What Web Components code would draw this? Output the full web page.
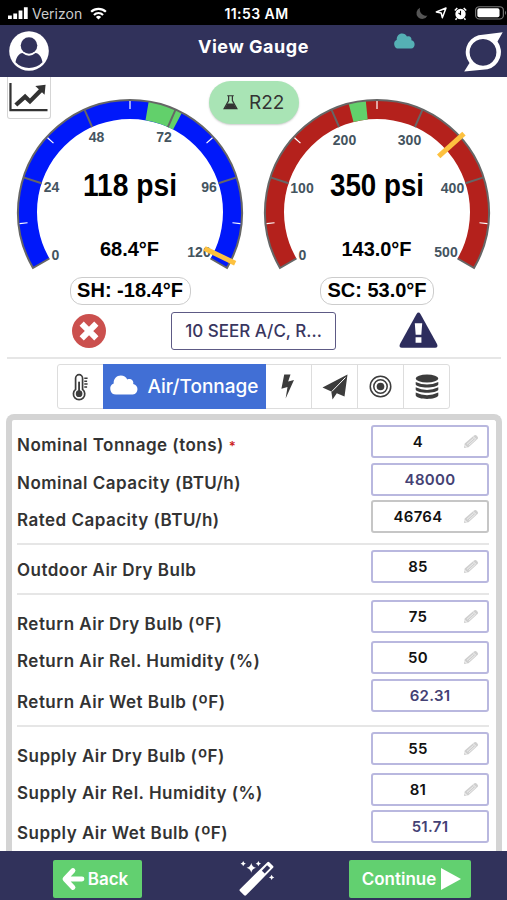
<!DOCTYPE html>
<html lang="en">
<head>
<meta charset="utf-8">
<meta name="viewport" content="width=device-width, initial-scale=1">
<title>View Gauge</title>
<style>
html, body {
  margin: 0;
  height: 100%;
  overflow: hidden;
  background: #fff;
  font-family: Inter, "Liberation Sans", sans-serif;
}
</style>
</head>
<body>
<gauge-app></gauge-app>

<script>
const define = (name, html, setup) => {
  const template = document.createElement("template");
  template.innerHTML = html;
  window.customElements.define(name, class extends HTMLElement {
    constructor() {
      super();
      this.attachShadow({ mode: "open" });
      this.shadowRoot.appendChild(template.content.cloneNode(true));
    }
    connectedCallback() {
      if (setup) setup(this, this.shadowRoot);
    }
  });
};

const ICONS = {
  user: ["0 0 40 40", `<circle cx="20" cy="20" r="19.8" fill="#fff"/><circle cx="20" cy="14.500" r="8.300" fill="#31325b"/><path d="M6.500 31.300C7.500 25.500 10 22.500 13.500 22q6.500 5.500 13 0c3.500.5 6 3.500 7 9.300Q28 37 20 37T6.500 31.300z" fill="#31325b"/>`],
  ring: ["0 0 39 40", `<path fill="#fff" fill-rule="evenodd" d="M38.700.3 33.500 9.500A17.800 17.800 0 0 1 23.500 37.300L.2 39.500 5.500 31A17.500 17.500 0 0 1 14.500 3.300zM19 6.900a13.400 13.400 0 1 0 .01 0z"/>`],
  cloud: ["0 0 28 20", `<path d="M6 19.500a5.800 5.800 0 0 1-2.300-11.100C3.300 3.800 6.700.5 10.800.5c3 0 5.200 1.500 6.500 4 3.500-1.500 6.800 1 5.900 4.500 5.800.8 5.800 9.800-.4 10.500z" fill="currentColor"/>`],
  chart: ["0 0 40 32", `<path d="M1.500 1v29H39.500" fill="none" stroke="#333" stroke-width="2.300"/><path d="m7 24.500 9.500-8.800 5 5L33 8.500" fill="none" stroke="#333" stroke-width="4.400"/><path d="M27 4.200 37.500 3 36.500 13.500z" fill="#333"/>`],
  flask: ["0 0 16 16", `<path d="M4.500.8h7M6 1v5L1.200 14.500h13.600L10 6V1" fill="none" stroke="#333" stroke-width="1.300"/><path d="M4.800 9h6.400l3 5H1.800z" fill="#333"/>`],
  cross: ["0 0 34 34", `<circle cx="17" cy="17" r="17" fill="#cb504e"/><path d="m11.800 11.800 10.400 10.400m0-10.400-10.400 10.400" stroke="#fff" stroke-width="6" stroke-linecap="square" stroke-linejoin="round"/>`],
  warning: ["0 0 40 37", `<path d="M18 2q2-3 4 0l17 31q1.500 3.700-2 3.700H3q-3.500 0-2-3.700z" fill="#2d2d5d"/><path d="M16.200 11.500h7.600l-.9 12h-5.800zM17 26h6v5.700h-6z" fill="#fff"/>`],
  thermo: ["0 0 18 28", `<path d="M3.800 17V5.500a3.700 3.700 0 0 1 7.400 0V17a6 6 0 1 1-7.400 0z" fill="none" stroke="#3c3c3c" stroke-width="1.800"/><path d="M7.500 9v12" stroke="#3c3c3c" stroke-width="2"/><circle cx="7.500" cy="21.500" r="3.500" fill="#3c3c3c"/><path d="M13 5.500h3.500M13 8.500h3M13 11.500h3.500M13 14.500h3" stroke="#3c3c3c" stroke-width="1.500"/>`],
  bolt: ["0 0 16 25", `<path d="M4.500.5h6.700L8.700 7.500l6.200-1.500L6 24.500l2-11.500-6.500 1.700z" fill="#3c3c3c"/>`],
  plane: ["0 0 26 26", `<path d="M25.500.5 22.500 22.500 14.800 19.200 10.500 25.500 9.300 17.500.5 13.500z" fill="#3c3c3c"/><path d="M23.500 3.500 9.800 17.500" stroke="#fff" stroke-width="1"/>`],
  target: ["0 0 24 24", `<g fill="none" stroke="#3c3c3c" stroke-width="1.600"><circle cx="12" cy="12" r="10.700"/><circle cx="12" cy="12" r="7"/></g><circle cx="12" cy="12" r="4" fill="#3c3c3c"/>`],
  database: ["0 0 24 26", `<g fill="#3c3c3c"><ellipse cx="12" cy="4.500" rx="11.300" ry="4"/><path d="M.7 8q11.300 5.200 22.600 0v2.500c-1.500 4-21 4-22.600 0z"/><path d="M.7 13.300q11.300 5.200 22.600 0v2.500c-1.500 4-21 4-22.600 0z"/><path d="M.7 18.600q11.300 5.200 22.600 0v3c-1.500 4.500-21 4.500-22.600 0z"/></g>`],
  pencil: ["0 0 16 16", `<path d="m1 15 .7-5L11 1.500Q12.500.3 13.800 1.800l.8 1Q15.800 4 14.500 5.300L5.500 14z" fill="#cfcfcf"/><path d="m4 11 6.500-6.300M5.800 12 12 6M10 2.700 13.300 6" stroke="#f3f3f3" stroke-width=".9"/><path d="m1.800 12 2 2.300" stroke="#fff" stroke-width="1"/>`],
  back: ["0 0 22 22", `<path d="M11 2.500 3 11l8 8.500M3.500 11H20" fill="none" stroke="#fff" stroke-width="4.800" stroke-linecap="round" stroke-linejoin="round"/>`],
  play: ["0 0 20 22", `<path d="M0 0 20 11 0 22z" fill="#fff"/>`],
  wand: ["0 0 38 38", `<path d="M31 1.200q1-1 2 0l4 4q1 1 0 2L8.500 36.200q-1 1-2 0l-4.500-4.500q-1-1 0-2z" fill="#fff"/><path d="m25.200 10.200 5.500-5.700 3.300 3-5.800 5.700z" fill="#31325b"/><path d="M14 2q.8 4 5 5.200-4.200 1.200-5 5.200-.8-4-5-5.200Q13.200 6 14 2zM5.500 0l1 1.800 1.800 1-1.800 1-1 1.800-1-1.800-1.800-1 1.800-1zM21.500 0l1 1.800 1.800 1-1.800 1-1 1.800-1-1.800-1.800-1 1.800-1zM35.500 14.500l1 1.800 1.800 1-1.800 1-1 1.800-1-1.800-1.800-1 1.800-1z" fill="#fff"/>`],
  wifi: ["0 0 18 14", `<g fill="none" stroke="#fff" stroke-width="2.300"><path d="M1.200 5.200a11 11 0 0 1 15.600 0M4.200 8.500a6.800 6.800 0 0 1 9.600 0"/></g><path d="M9 13.500 6.200 10.700a4 4 0 0 1 5.600 0z" fill="#fff"/>`],
  signal: ["0 0 20 12", `<path d="M0 8.500h3.800V12H0zM5.300 6.500h3.800V12H5.300zM10.600 3.500h3.800V12h-3.800zM15.900.3h3.800V12h-3.800z" fill="#fff"/>`],
  moon: ["0 0 12 12", `<path d="M4 .8a5.800 5.800 0 1 0 7.500 7.800A6.300 6.300 0 0 1 4 .8z" fill="#555"/>`],
  arrow: ["0 0 12 12", `<path d="M11 1 7.300 10.700 6.200 6 1.300 5z" fill="none" stroke="#fff" stroke-width="1.500" stroke-linejoin="round"/>`],
  alarm: ["0 0 13 13", `<circle cx="6.500" cy="7" r="5.200" fill="#fff"/><path d="M.8 3.500 3.300 1m6.400 0 2.500 2.500M2.800 11.200 1.500 12.800m8.700-1.600 1.300 1.600" stroke="#fff" stroke-width="1.500"/><path d="M6.500 3.800V7.400L4.500 6" fill="none" stroke="#000" stroke-width="1.100"/>`],
  battery: ["0 0 30 14", `<rect x=".6" y=".7" width="26" height="12.300" rx="3.500" fill="none" stroke="#777" stroke-width="1.100"/><rect x="2.200" y="2.300" width="20.800" height="9" rx="1.800" fill="#fff"/><path d="M28.200 4.500q1.800 2.300 0 4.600z" fill="#777"/>`]
};

define("ui-icon", `
<style>
:host { display: block; flex: none; }
svg { display: block; width: 100%; height: 100%; overflow: visible; }
</style>
<svg preserveAspectRatio="none"></svg>
`, (el, root) => {
  const [box, shapes] = ICONS[el.getAttribute("name")];
  const svg = root.querySelector("svg");
  svg.setAttribute("viewBox", box);
  svg.innerHTML = shapes;
});

define("status-bar", `
<style>
:host {
  display: grid;
  grid-template-columns: 1fr auto 1fr;
  align-items: center;
  height: 25px;
  padding: 1px 8px 0;
  box-sizing: border-box;
  background: #000;
  color: #fff;
  font-size: 14px;
}
div { display: flex; align-items: center; }
.carrier { color: #ccc; margin: 0 8px 0 4px; }
.time { font-weight: 600; letter-spacing: .45px; padding-left: 6px; }
.right { justify-content: flex-end; }
</style>
<div>
  <ui-icon name="signal" style="width:20px;height:12px"></ui-icon>
  <span class="carrier">Verizon</span>
  <ui-icon name="wifi" style="width:17px;height:13px"></ui-icon>
</div>
<span class="time">11:53 AM</span>
<div class="right">
  <ui-icon name="moon" style="width:12px;height:12px;margin-right:7px"></ui-icon>
  <ui-icon name="arrow" style="width:12px;height:12px;margin-right:7px"></ui-icon>
  <ui-icon name="alarm" style="width:13px;height:13px;margin-right:8px"></ui-icon>
  <ui-icon name="battery" style="width:32px;height:14px;margin-right:-8px"></ui-icon>
</div>
`);

define("nav-bar", `
<style>
:host {
  display: grid;
  grid-template-columns: 1fr auto 1fr;
  height: 52px;
  padding: 0 4px 0 9px;
  box-sizing: border-box;
  background: #31325b;
  color: #fff;
}
h1 { margin: 11px 5px 0 0; font-size: 18px; line-height: 22px; font-weight: 700; letter-spacing: .55px; }
.right { display: flex; justify-content: flex-end; }
</style>
<ui-icon name="user" style="width:40px;height:40px;margin-top:6px"></ui-icon>
<h1><slot></slot></h1>
<div class="right">
  <ui-icon name="cloud" style="width:21px;height:16px;margin:8px 49px 0 0;color:#55b0b5"></ui-icon>
  <ui-icon name="ring" style="width:39px;height:40px;margin-top:7px"></ui-icon>
</div>
`);

// Arc runs 240 degrees clockwise, starting at the lower left.
const R = 112;
const INNER = 93;
const point = (r, deg) => {
  const a = deg * Math.PI / 180;
  return `${(120 + r * Math.cos(a)).toFixed(2)} ${(136 + r * Math.sin(a)).toFixed(2)}`;
};
const band = (from, to) => {
  const large = to - from > 180 ? 1 : 0;
  return `M${point(R, from)}A${R} ${R} 0 ${large} 1 ${point(R, to)}L${point(INNER, to)}A${INNER} ${INNER} 0 ${large} 0 ${point(INNER, from)}Z`;
};

define("gauge-dial", `
<style>
:host { display: block; width: 240px; }
svg { display: block; width: 240px; height: 200px; overflow: visible; font-family: "Liberation Sans", Arial, sans-serif; font-weight: 700; text-anchor: middle; }
.mark { font-size: 14px; fill: #44545f; }
.value { font-size: 32px; }
.temp { font-size: 20px; }
.reading {
  box-sizing: border-box;
  height: 28px;
  margin: 1px auto 0;
  border: 1.500px solid #ccc;
  border-radius: 12px;
  font: 700 20px/25px "Liberation Sans", Arial, sans-serif;
  text-align: center;
  white-space: nowrap;
}
</style>
<svg viewBox="0 0 240 200"></svg>
<div class="reading"><slot></slot></div>
`, (el, root) => {
  const max = Number(el.getAttribute("max"));
  const value = Number(el.getAttribute("value"));
  const [low, high] = el.getAttribute("target").split(" ").map(Number);
  const spots = el.getAttribute("marks").split(" ").map((s) => s.split(","));
  const angle = (v) => 150 + v / max * 240;
  let s = `<path d="${band(150, 390)}" fill="${el.getAttribute("color")}"/>`;
  s += `<path d="${band(angle(low), angle(high))}" fill="#62d06b"/>`;
  s += `<path d="M${point(INNER, 150)}L${point(R, 150)}A${R} ${R} 0 1 1 ${point(R, 390)}L${point(INNER, 390)}" fill="none" stroke="#666" stroke-width="2"/>`;
  for (let i = 1; i < 5; i++) {
    s += `<path d="M${point(INNER, 150 + i * 48)}L${point(R, 150 + i * 48)}" stroke="#666" stroke-width="2"/>`;
  }
  for (let i = 0; i < 5; i++) {
    s += `<path d="M${point(103, 174 + i * 48)}L${point(111, 174 + i * 48)}" stroke="#fff" stroke-width="1.200"/>`;
  }
  spots.forEach(([x, y], i) => {
    s += `<text class="mark" x="${x}" y="${y}">${max / 5 * i}</text>`;
  });
  s += `<path d="M${point(83, angle(value))}L${point(117, angle(value))}" stroke="#fdc13f" stroke-width="5"/>`;
  s += `<text class="value" x="120" y="120" textLength="94" lengthAdjust="spacingAndGlyphs">${value} psi</text>`;
  s += `<text class="temp" x="119.500" y="179.500" textLength="${el.getAttribute("temp-width")}">${el.getAttribute("temp")}</text>`;
  root.querySelector("svg").innerHTML = s;
  root.querySelector(".reading").style.width = el.getAttribute("pill") + "px";
});

define("gauge-panel", `
<style>
:host { display: block; position: relative; height: 229px; }
.dials { display: flex; gap: 7px; padding-left: 10px; margin-top: -1px; }
.trend {
  position: absolute;
  left: 7px;
  top: 0;
  width: 44px;
  height: 42px;
  box-sizing: border-box;
  border: 1px solid #d5d5d5;
  border-top: 0;
  border-radius: 0 0 3px 3px;
  background: #fff;
  padding: 5px 1px;
}
.gas {
  position: absolute;
  left: 209px;
  top: 4px;
  width: 90px;
  height: 43px;
  box-sizing: border-box;
  display: flex;
  align-items: center;
  gap: 11px;
  padding-left: 14px;
  border-radius: 22px;
  background: #a9e4b5;
  color: #333;
  font-size: 19px;
  box-shadow: 0 1px 2px #ccc;
}
</style>
<div class="dials">
  <gauge-dial color="#0018fa" max="120" value="118" target="64.800 73.800" temp="68.4°F" temp-width="59" pill="121"
    marks="45.500,184 41.500,115.500 86.500,65.500 154,65.500 199,115.500 189,181">SH: -18.4°F</gauge-dial>
  <gauge-dial color="#b4211c" max="500" value="350" target="219.500 238" temp="143.0°F" temp-width="70" pill="114"
    marks="45.500,184 45,116.500 87.500,69 152.500,69 195.500,116.500 189,181">SC: 53.0°F</gauge-dial>
</div>
<div class="trend"><ui-icon name="chart" style="width:39px;height:30px"></ui-icon></div>
<div class="gas"><ui-icon name="flask" style="width:15px;height:15px"></ui-icon><slot></slot></div>
`);

define("system-row", `
<style>
:host {
  display: flex;
  align-items: center;
  height: 53px;
  margin: 0 6px 0 7px;
  padding: 0 63px 1px 65px;
  border-bottom: 2px solid #e6e6e6;
  box-sizing: border-box;
  justify-content: space-between;
}
button {
  width: 165px;
  height: 38px;
  padding: 0;
  border: 1.500px solid #5d5a85;
  border-radius: 3px;
  background: #fff;
  color: #39365f;
  font: 500 17px Inter, sans-serif;
  letter-spacing: 0;
  margin-left: 2px;
}
</style>
<ui-icon name="cross" style="width:34px;height:34px"></ui-icon>
<button><slot></slot></button>
<ui-icon name="warning" style="width:39px;height:36px;margin-top:-2px"></ui-icon>
`);

define("tab-strip", `
<style>
:host { display: flex; width: 393px; height: 45px; margin: 5px 0 5px 57px; box-sizing: border-box; border: 1px solid #ddd; border-radius: 3px; }
div { display: flex; flex: 1; align-items: center; justify-content: center; border-left: 1px solid #ddd; }
div:first-of-type { flex: none; width: 45px; border-left: 0; }
.active { flex: none; width: 163px; margin: -1px 0; border: 0; gap: 9px; background: #416fd5; color: #fff; font-size: 19px; font-weight: 500; white-space: nowrap; }
.active + div { border-left: 0; }
</style>
<div><ui-icon name="thermo" style="width:17px;height:27px"></ui-icon></div>
<div class="active"><ui-icon name="cloud" style="width:28px;height:20px;margin-top:-3px"></ui-icon><slot></slot></div>
<div><ui-icon name="bolt" style="width:15px;height:25px;margin-right:3px"></ui-icon></div>
<div><ui-icon name="plane" style="width:26px;height:26px"></ui-icon></div>
<div><ui-icon name="target" style="width:23px;height:23px"></ui-icon></div>
<div><ui-icon name="database" style="width:24px;height:26px"></ui-icon></div>
`);

define("field-row", `
<style>
:host {
  display: flex;
  justify-content: space-between;
  align-items: flex-start;
  height: 33px;
}
label {
  padding-top: 9px;
  font-size: 17px;
  line-height: 22px;
  font-weight: 600;
  letter-spacing: .48px;
  color: #333;
  white-space: nowrap;
}
:host([low]) label { padding-top: 13px; }
:host([computed][low]) label { padding-top: 12px; }
.box {
  display: flex;
  align-items: center;
  box-sizing: border-box;
  width: 118px;
  height: 33px;
  border: 2px solid #b9b8df;
  border-radius: 3px;
  font-size: 15px;
  font-weight: 600;
  letter-spacing: .3px;
  color: #111;
}
.value { flex: 1; text-align: center; }
:host([computed]) .box { color: #444174; }
:host([muted]) .box { border-color: #c6c6c6; }
:host([computed]) ui-icon { display: none; }
ui-icon { width: 16px; height: 15px; margin-right: 8px; }
</style>
<label><slot></slot></label>
<div class="box"><span class="value"></span><ui-icon name="pencil"></ui-icon></div>
`, (el, root) => {
  root.querySelector(".value").textContent = el.getAttribute("value");
});

define("field-group", `
<style>
:host { display: flex; flex-direction: column; border-bottom: 2px solid #e6e6e6; }
</style>
<slot></slot>
`);

define("load-form", `
<style>
:host {
  display: block;
  flex: 1;
  min-height: 0;
  overflow: hidden;
  margin: 0 5px 0 6px;
  border: 6px solid #d4d4d4;
  border-bottom: 0;
  border-radius: 8px 8px 0 0;
  background: #fff;
  padding: 5px 7px 0 5px;
}
.required { color: #c22; font-size: 13px; }
.deg { font-size: 22px; line-height: 0; vertical-align: -3px; letter-spacing: 0; font-weight: 500; }
</style>
<field-group style="padding-bottom:10px;gap:4.500px">
  <field-row value="4">Nominal Tonnage (tons) <span class="required">*</span></field-row>
  <field-row value="48000" computed>Nominal Capacity (BTU/h)</field-row>
  <field-row value="46764" muted>Rated Capacity (BTU/h)</field-row>
</field-group>
<field-group style="padding:5px 0 10px">
  <field-row value="85">Outdoor Air Dry Bulb</field-row>
</field-group>
<field-group style="padding:5px 0 13px">
  <field-row value="75" low style="margin-bottom:8px">Return Air Dry Bulb (<span class="deg">º</span>F)</field-row>
  <field-row value="50" style="margin-bottom:4.500px">Return Air Rel. Humidity (%)</field-row>
  <field-row value="62.31" computed low>Return Air Wet Bulb (<span class="deg">º</span>F)</field-row>
</field-group>
<field-group style="padding:5px 0 13px">
  <field-row value="55" low style="margin-bottom:8px">Supply Air Dry Bulb (<span class="deg">º</span>F)</field-row>
  <field-row value="81" style="margin-bottom:4.500px">Supply Air Rel. Humidity (%)</field-row>
  <field-row value="51.71" computed low>Supply Air Wet Bulb (<span class="deg">º</span>F)</field-row>
</field-group>
`);

define("bottom-bar", `
<style>
:host {
  display: flex;
  flex: none;
  align-items: flex-start;
  height: 49px;
  padding: 9px 36px 0 53px;
  box-sizing: border-box;
  background: #31325b;
}
button {
  display: flex;
  align-items: center;
  justify-content: center;
  gap: 5px;
  height: 38px;
  padding: 0;
  border: 0;
  border-radius: 2px;
  background: #62d070;
  color: #fff;
  font: 600 17px Inter, sans-serif;
}
.back { width: 89px; gap: 4px; padding-right: 5px; }
.next { width: 122px; margin-left: auto; padding-left: 3px; }
</style>
<button class="back"><ui-icon name="back" style="width:22px;height:22px"></ui-icon>Back</button>
<ui-icon name="wand" style="width:36px;height:36px;margin:1px 0 0 96px"></ui-icon>
<button class="next">Continue<ui-icon name="play" style="width:20px;height:22px"></ui-icon></button>
`);

define("gauge-app", `
<style>
:host { display: flex; flex-direction: column; height: 900px; width: 507px; background: #fff; }
</style>
<status-bar></status-bar>
<nav-bar>View Gauge</nav-bar>
<gauge-panel>R22</gauge-panel>
<system-row>10 SEER A/C, R...</system-row>
<tab-strip>Air/Tonnage</tab-strip>
<load-form></load-form>
<bottom-bar></bottom-bar>
`);
</script>
</body>
</html>
